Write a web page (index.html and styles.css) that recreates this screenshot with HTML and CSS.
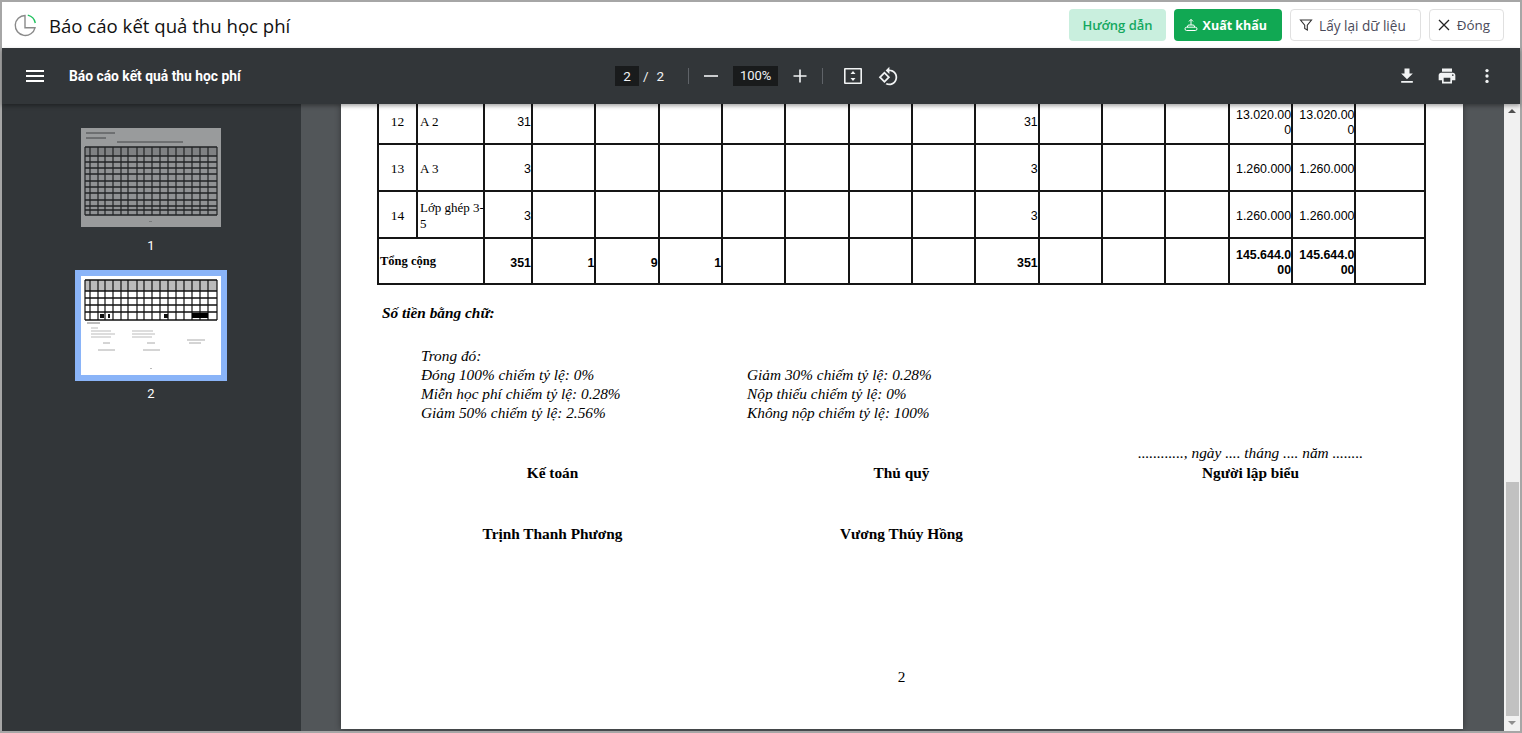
FILE: index.html
```html
<!DOCTYPE html>
<html lang="vi">
<head>
    <meta charset="UTF-8">
    <title>Báo cáo kết quả thu học phí</title>
    <link rel="stylesheet" href="styles.css">
</head>
<body>
<div class="frame">
    <header class="top-bar">
        <svg class="report-icon" width="24" height="24" viewBox="0 0 24 24" fill="none">
            <path d="M12 2.500A10 10 0 1 0 22 14.800H12z" stroke="#8a8a8a" stroke-width="1.400"/>
            <path d="M14.800 2.100A10 10 0 0 1 22.300 10" stroke="#1fc15e" stroke-width="1.400"/>
        </svg>
        <h1 class="report-title">Báo cáo kết quả thu học phí</h1>
        <div class="top-actions">
            <button class="btn btn-guide">Hướng dẫn</button>
            <button class="btn btn-export">
                <svg width="14" height="14" viewBox="0 0 14 14" fill="none" stroke="#fff" stroke-width="1">
                    <path d="M7 7V1.500M5 3.400L7 1.400 9 3.400"/>
                    <path d="M3.200 9.200L4.300 7h5.400l1.100 2.200"/>
                    <rect x="1" y="9.200" width="12" height="3.300" rx="1.650"/>
                </svg>
                Xuất khẩu
            </button>
            <button class="btn btn-plain">
                <svg width="14" height="14" viewBox="0 0 14 14" fill="none" stroke="#333" stroke-width="1.100">
                    <path d="M1.500 2h11L8.300 7.200V12l-2.600-1.500V7.200z"/>
                </svg>
                Lấy lại dữ liệu
            </button>
            <button class="btn btn-plain btn-close">
                <svg width="14" height="14" viewBox="0 0 14 14" fill="none" stroke="#222" stroke-width="1.300">
                    <path d="M2 2l10 10M12 2L2 12"/>
                </svg>
                Đóng
            </button>
        </div>
    </header>

    <div class="viewer-bar">
        <div class="viewer-left">
            <svg class="ico menu-ico" width="24" height="24" viewBox="0 0 24 24" fill="#fff"><path d="M3 18h18v-2H3v2zm0-5h18v-2H3v2zm0-7v2h18V6H3z"/></svg>
            <span class="doc-name">Báo cáo kết quả thu học phí</span>
        </div>
        <div class="viewer-center">
            <span class="num-box page-box">2</span>
            <span class="page-sep">/</span>
            <span class="page-total">2</span>
            <span class="divider first-div"></span>
            <svg width="20" height="20" viewBox="0 0 20 20" fill="#f1f3f4"><path d="M3 9.200h14v1.600H3z"/></svg>
            <span class="num-box zoom-box">100%</span>
            <svg width="20" height="20" viewBox="0 0 20 20" fill="#f1f3f4"><path d="M3.500 9.200h5.700V3.500h1.600v5.700h5.700v1.600h-5.700v5.700H9.200v-5.700H3.500z"/></svg>
            <span class="divider second-div"></span>
            <svg class="fit-ico" width="22" height="22" viewBox="0 0 22 22" fill="#f1f3f4">
                <path d="M3 3h16a1 1 0 0 1 1 1v14a1 1 0 0 1-1 1H3a1 1 0 0 1-1-1V4a1 1 0 0 1 1-1zm.600 1.600v12.800h14.800V4.600z" fill-rule="evenodd"/>
                <path d="M11 6l2.500 3h-5zM11 16l-2.500-3h5z"/>
            </svg>
            <svg class="rotate-ico" width="21" height="21" viewBox="0 0 24 24" fill="#f1f3f4"><path d="M7.340 6.410L.86 12.900l6.490 6.480 6.490-6.480-6.500-6.490zM3.690 12.900l3.660-3.660L11 12.900l-3.660 3.660-3.650-3.660zm15.670-6.260C17.610 4.880 15.300 4 13 4V.76L8.760 5 13 9.240V6c1.790 0 3.580.68 4.950 2.050 2.730 2.730 2.730 7.170 0 9.900C16.580 19.320 14.790 20 13 20c-.97 0-1.940-.21-2.840-.61l-1.490 1.490C10.020 21.620 11.510 22 13 22c2.300 0 4.610-.88 6.360-2.640 3.520-3.510 3.520-9.210 0-12.720z"/></svg>
        </div>
        <div class="viewer-right">
            <svg width="20" height="20" viewBox="0 0 24 24" fill="#f1f3f4"><path d="M19 9h-4V3H9v6H5l7 7 7-7zM5 18v2h14v-2H5z"/></svg>
            <svg width="20" height="20" viewBox="0 0 24 24" fill="#f1f3f4"><path d="M19 8H5c-1.660 0-3 1.340-3 3v6h4v4h12v-4h4v-6c0-1.660-1.340-3-3-3zm-3 11H8v-5h8v5zm3-7c-.55 0-1-.45-1-1s.45-1 1-1 1 .45 1 1-.45 1-1 1zm-1-9H6v4h12V3z"/></svg>
            <svg width="20" height="20" viewBox="0 0 24 24" fill="#f1f3f4"><circle cx="12" cy="5.500" r="2"/><circle cx="12" cy="12" r="2"/><circle cx="12" cy="18.500" r="2"/></svg>
        </div>
    </div>

    <div class="viewer-body">
        <aside class="thumbs">
            <div class="thumb first-thumb">
                <svg class="thumb-page dim" width="140" height="99" viewBox="0 0 140 99">
                    <rect width="140" height="99" fill="#fff"/>
                    <path d="M5 5h29M5 10h20M36 14h66" stroke="#555" stroke-width="1"/>
                    <rect x="4" y="19" width="132" height="9" fill="#ccc"/>
                    <rect x="4" y="28" width="132" height="59" fill="#eee"/>
                    <path d="M4 19h132M4 28h132M4 34h132M4 40h132M4 46h132M4 53h132M4 59h132M4 65h132M4 72h132M4 78h132M4 82h132M4 87h132" stroke="#111" stroke-width="1.400"/>
                    <path d="M4 19v68M9 19v68M17 19v68M24 19v68M32 19v68M40 19v68M47 19v68M56 19v68M63 19v68M71 19v68M79 19v68M87 19v68M95 19v68M103 19v68M111 19v68M119 19v68M127 19v68M136 19v68" stroke="#111" stroke-width="1.200"/>
                    <rect x="68" y="93" width="3" height="1" fill="#bbb"/>
                </svg>
                <span class="thumb-num">1</span>
            </div>
            <div class="thumb">
                <svg class="thumb-page selected" width="140" height="99" viewBox="0 0 140 99">
                    <rect width="140" height="99" fill="#fff"/>
                    <rect x="4" y="4" width="132" height="11" fill="#bbb"/>
                    <path d="M4 4h132M4 15h132M4 22h132M4 29h132M4 36h132M4 44h132" stroke="#111" stroke-width="1.300"/>
                    <path d="M4 4v40M9 4v40M17 4v40M24 4v40M32 4v40M40 4v40M47 4v40M56 4v40M63 4v40M71 4v40M79 4v40M87 4v40M95 4v40M103 4v40M111 4v40M119 4v40M127 4v40M136 4v40" stroke="#111" stroke-width="1.200"/>
                    <rect x="19" y="38" width="4" height="4" fill="#111"/>
                    <rect x="27" y="38" width="2" height="4" fill="#111"/>
                    <rect x="83" y="38" width="4" height="4" fill="#111"/>
                    <rect x="111" y="37" width="16" height="5" fill="#000"/>
                    <path d="M6 47h13" stroke="#777" stroke-width="1"/>
                    <path d="M10 52h7M10 55h20M10 58h24M10 61h20M51 55h21M51 58h23M51 61h20" stroke="#bbb" stroke-width="1"/>
                    <path d="M22 67h7M66 67h8M106 64h18M108 67h12M17 74h17M62 74h17" stroke="#aaa" stroke-width="1"/>
                    <rect x="69" y="92" width="2" height="1" fill="#bbb"/>
                </svg>
                <span class="thumb-num">2</span>
            </div>
        </aside>

        <main class="doc-area">
            <div class="doc-page">
                <table class="grid">
                    <colgroup>
                        <col class="c-stt"><col class="c-name"><col class="c-total">
                        <col class="c-n"><col class="c-n"><col class="c-n"><col class="c-n"><col class="c-n"><col class="c-n"><col class="c-n">
                        <col class="c-n"><col class="c-n"><col class="c-n"><col class="c-n"><col class="c-n"><col class="c-n">
                        <col class="c-last">
                    </colgroup>
                    <tr>
                        <td class="stt">12</td><td class="name">A 2</td><td class="val">31</td>
                        <td></td><td></td><td></td><td></td><td></td><td></td><td></td>
                        <td class="val">31</td><td></td><td></td><td></td>
                        <td class="val">13.020.000</td><td class="val">13.020.000</td><td></td>
                    </tr>
                    <tr>
                        <td class="stt">13</td><td class="name">A 3</td><td class="val">3</td>
                        <td></td><td></td><td></td><td></td><td></td><td></td><td></td>
                        <td class="val">3</td><td></td><td></td><td></td>
                        <td class="val">1.260.000</td><td class="val">1.260.000</td><td></td>
                    </tr>
                    <tr>
                        <td class="stt">14</td><td class="name">Lớp ghép 3-<br>5</td><td class="val">3</td>
                        <td></td><td></td><td></td><td></td><td></td><td></td><td></td>
                        <td class="val">3</td><td></td><td></td><td></td>
                        <td class="val">1.260.000</td><td class="val">1.260.000</td><td></td>
                    </tr>
                    <tr class="sum">
                        <td class="sum-label" colspan="2">Tổng cộng</td><td class="val">351</td>
                        <td class="val">1</td><td class="val">9</td><td class="val">1</td><td></td><td></td><td></td><td></td>
                        <td class="val">351</td><td></td><td></td><td></td>
                        <td class="val">145.644.000</td><td class="val">145.644.000</td><td></td>
                    </tr>
                </table>

                <p class="in-words">Số tiền bằng chữ:</p>

                <div class="rates">
                    <div class="rates-col">
                        <div>Trong đó:</div>
                        <div>Đóng 100% chiếm tỷ lệ: 0%</div>
                        <div>Miễn học phí chiếm tỷ lệ: 0.28%</div>
                        <div>Giảm 50% chiếm tỷ lệ: 2.56%</div>
                    </div>
                    <div class="rates-col">
                        <div>&nbsp;</div>
                        <div>Giảm 30% chiếm tỷ lệ: 0.28%</div>
                        <div>Nộp thiếu chiếm tỷ lệ: 0%</div>
                        <div>Không nộp chiếm tỷ lệ: 100%</div>
                    </div>
                </div>

                <div class="signs">
                    <div class="sign"><div class="sign-date">&nbsp;</div><b>Kế toán</b><b class="sign-name">Trịnh Thanh Phương</b></div>
                    <div class="sign"><div class="sign-date">&nbsp;</div><b>Thủ quỹ</b><b class="sign-name">Vương Thúy Hồng</b></div>
                    <div class="sign"><div class="sign-date">............, ngày .... tháng .... năm ........</div><b>Người lập biểu</b></div>
                </div>

                <div class="page-no">2</div>
            </div>
        </main>

        <div class="scrollbar">
            <span class="arrow up"></span>
            <span class="track"><span class="handle"></span></span>
            <span class="arrow down"></span>
        </div>
    </div>
</div>
</body>
</html>
```

FILE: styles.css
```css
html, body {
    margin: 0;
    height: 100%;
    overflow: hidden;
}
.frame {
    box-sizing: border-box;
    height: 733px;
    display: flex;
    flex-direction: column;
    border: 2px solid #a6a6a6;
    background: #fff;
}

/* thanh tieu de */
.top-bar {
    height: 46px;
    flex: none;
    display: flex;
    align-items: center;
    padding: 0 16px 0 11px;
    font-family: "Open Sans", sans-serif;
}
.report-icon {
    margin-right: 12px;
}
.report-title {
    margin: 0;
    font-size: 18.600px;
    font-weight: 400;
    color: #111;
}
.top-actions {
    margin-left: auto;
    display: flex;
    gap: 8px;
}
.btn {
    height: 32px;
    display: flex;
    align-items: center;
    gap: 6px;
    padding: 0 12px;
    border: 1px solid transparent;
    border-radius: 4px;
    font-family: "Open Sans", sans-serif;
    font-size: 13px;
    background: #fff;
    box-sizing: border-box;
}
.btn-guide {
    background: #c9efde;
    color: #14a860;
    font-weight: 600;
}
.btn-export {
    background: #11a853;
    color: #fff;
    font-size: 12.500px;
    font-weight: 700;
    gap: 5px;
    padding: 0 14px 0 9px;
}
.btn-plain {
    border-color: #e0e0e0;
    color: #4a4a5a;
    font-size: 13.600px;
    padding: 0 14px 0 8px;
}
.btn-close {
    font-size: 13.400px;
    padding: 0 13px 0 7px;
}

/* thanh pdf */
.viewer-bar {
    height: 56px;
    flex: none;
    display: flex;
    align-items: center;
    background: #323639;
    color: #f1f3f4;
    font-family: Roboto, sans-serif;
    box-shadow: 0 2px 4px rgba(0,0,0,0.35);
    position: relative;
    z-index: 2;
}
.viewer-left {
    width: 400px;
    display: flex;
    align-items: center;
    padding-left: 21px;
    box-sizing: border-box;
}
.doc-name {
    margin-left: 22px;
    font-size: 13.850px;
    font-weight: 700;
    color: #fff;
}
.viewer-center {
    display: flex;
    align-items: center;
    margin-left: 213px;
    font-size: 13.500px;
}
.num-box {
    background: #191b1c;
    height: 20px;
    line-height: 20px;
    text-align: center;
}
.page-box {
    width: 24px;
}
.page-sep {
    margin: 0 8px 0 4px;
}
.divider {
    width: 1px;
    height: 16px;
    background: #5f6368;
}
.first-div {
    margin: 0 12px 0 24px;
}
.zoom-box {
    width: 45px;
    margin: 0 12px;
    font-size: 13px;
}
.second-div {
    margin: 0 19px 0 12px;
}
.rotate-ico {
    margin-left: 14px;
}
.viewer-right {
    margin-left: auto;
    display: flex;
    gap: 20px;
    padding-right: 23px;
}

.viewer-body {
    flex: 1;
    min-height: 0;
    display: flex;
}

/* cot thumbnail */
.thumbs {
    width: 299px;
    flex: none;
    background: #323639;
    display: flex;
    flex-direction: column;
    align-items: center;
    padding: 24px 1px 0 0;
    box-sizing: border-box;
}
.thumb {
    display: flex;
    flex-direction: column;
    align-items: center;
}
.first-thumb {
    margin-bottom: 23px;
}
.thumb-page {
    display: block;
}
.thumb-page.dim {
    opacity: 0.5;
}
.thumb-page.selected {
    box-shadow: 0 0 0 6px #8ab4f8;
}
.thumb-num {
    margin-top: 11px;
    color: #fff;
    font-family: Roboto, sans-serif;
    font-size: 13px;
    line-height: 15px;
}

/* vung tai lieu */
.doc-area {
    flex: 1;
    min-width: 0;
    background: #525659;
    padding: 0 41px 0 40px;
    overflow: hidden;
}
.doc-page {
    background: #fff;
    height: 625px;
    box-sizing: border-box;
    padding: 0 37px;
    overflow: hidden;
    font-family: "Liberation Serif", serif;
    color: #000;
    box-shadow: 0 0 6px rgba(0,0,0,0.4);
}
.grid {
    margin: -8px 0 0 -1px;
    width: 1048px;
    table-layout: fixed;
    border-collapse: collapse;
    font-size: 13px;
}
.grid td {
    border: 2px solid #151515;
    height: 47px;
    padding: 2px 1px 0;
    box-sizing: border-box;
}
.c-stt { width: 39px; }
.c-name { width: 67px; }
.c-total { width: 48px; }
.c-n { width: 63.350px; }
.c-last { width: 70px; }
.stt {
    text-align: center;
    font-size: 13.500px;
}
.grid .name {
    line-height: 16px;
    padding-left: 2px;
    padding-right: 0;
    font-size: 13px;
    white-space: nowrap;
}
.grid .val {
    text-align: right;
    font-family: "Liberation Sans", sans-serif;
    font-size: 12.400px;
    line-height: 15px;
    padding: 4px 0 0 1px;
    word-break: break-all;
}
.sum td {
    font-weight: 700;
}
.grid .sum-label {
    font-family: "Liberation Serif", serif;
    font-size: 12.500px;
    padding-top: 0;
}
.grid .sum td {
    height: 46px;
}
.in-words {
    margin: 18px 0 0 4px;
    font-size: 15.330px;
    font-weight: 700;
    font-style: italic;
    line-height: 20px;
}
.rates {
    margin: 23px 0 0 43px;
    display: grid;
    grid-template-columns: 326px 1fr;
    font-size: 15.330px;
    font-style: italic;
    line-height: 19px;
}
.signs {
    margin-top: 21px;
    display: grid;
    grid-template-columns: repeat(3, 349px);
    font-size: 15.330px;
    text-align: center;
}
.sign b {
    display: block;
    line-height: 20px;
}
.sign-date {
    font-style: italic;
    line-height: 20px;
}
.sign .sign-name {
    margin-top: 41px;
}
.page-no {
    margin-top: 124px;
    text-align: center;
    font-size: 15.330px;
    margin-left: -1px;
}

/* thanh cuon */
.scrollbar {
    width: 16px;
    flex: none;
    background: #f1f1f1;
    display: flex;
    flex-direction: column;
    align-items: center;
}
.arrow {
    flex: none;
    height: 15px;
    width: 100%;
    position: relative;
}
.arrow::after {
    content: "";
    position: absolute;
    left: 4px;
    top: 5px;
    border-left: 4px solid transparent;
    border-right: 4px solid transparent;
}
.up::after {
    border-bottom: 4px solid #505050;
}
.down::after {
    border-top: 4px solid #8f8f8f;
}
.track {
    flex: 1;
    width: 100%;
    display: flex;
    flex-direction: column;
    justify-content: flex-end;
    align-items: flex-end;
}
.handle {
    width: 13px;
    height: 234px;
    margin-right: 1px;
    background: #c1c1c1;
}
```
